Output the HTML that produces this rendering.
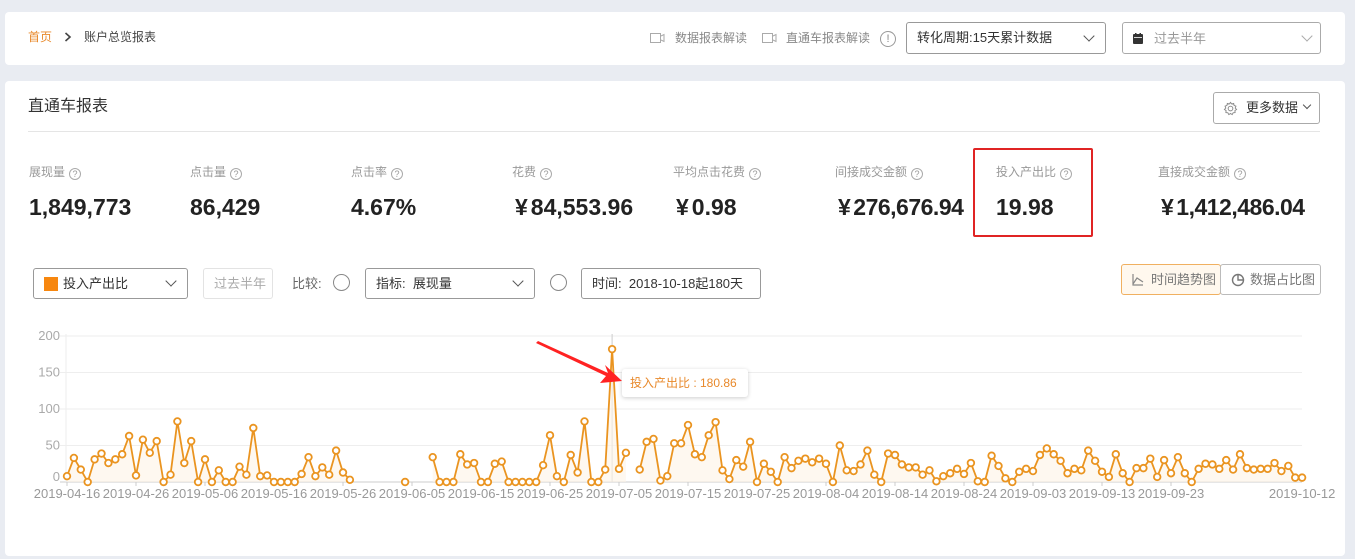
<!DOCTYPE html>
<html><head><meta charset="utf-8">
<style>
*{margin:0;padding:0;box-sizing:border-box}
body{width:1355px;height:559px;background:#e9ecf2;font-family:"Liberation Sans","Noto Sans CJK SC",sans-serif;position:relative;overflow:hidden;color:#333;line-height:1.2}
.a{position:absolute;white-space:nowrap}
.card{position:absolute;background:#fff;border-radius:4px}
.box{position:absolute;border:1px solid #bbb;border-radius:3px;background:#fff;font-size:13px;color:#333}
.chev{position:absolute;width:8px;height:8px;border-right:1.3px solid #555;border-bottom:1.3px solid #555;transform:rotate(45deg)}
.lbl{font-size:12px;color:#999}
.q{display:inline-block;width:12px;height:12px;border:1px solid #aaa;border-radius:50%;font-size:9px;line-height:10px;text-align:center;color:#999;margin-left:4px;vertical-align:-1px}
.val{font-size:23px;font-weight:bold;color:#222;line-height:24px}
.y{margin:0 3px 0 3px}
</style></head><body>
<div class="card" style="left:5px;top:12px;width:1340px;height:53px"></div>
<div class="a" style="left:28px;top:30px;font-size:12px;color:#e8892b">首页</div>
<svg class="a" style="left:64px;top:32px" width="8" height="10"><path d="M1.5 1 L6 5 L1.5 9" fill="none" stroke="#444" stroke-width="1.6"/></svg>
<div class="a" style="left:84px;top:30px;font-size:12px;color:#444">账户总览报表</div>
<svg class="a" style="left:650px;top:33px" width="16" height="11"><rect x="0.5" y="0.5" width="10" height="9" fill="none" stroke="#aaa"/><path d="M11 3 L14 1.5 V8.5 L11 7" fill="none" stroke="#aaa"/></svg>
<div class="a" style="left:675px;top:31px;font-size:12px;color:#888">数据报表解读</div>
<svg class="a" style="left:762px;top:33px" width="16" height="11"><rect x="0.5" y="0.5" width="10" height="9" fill="none" stroke="#aaa"/><path d="M11 3 L14 1.5 V8.5 L11 7" fill="none" stroke="#aaa"/></svg>
<div class="a" style="left:786px;top:31px;font-size:12px;color:#888">直通车报表解读</div>
<div class="a" style="left:880px;top:31px;width:16px;height:16px;border:1px solid #999;border-radius:50%;font-size:11px;line-height:14px;text-align:center;color:#888">!</div>
<div class="box" style="left:906px;top:22px;width:200px;height:32px;border-color:#999"><span class="a" style="left:10px;top:7px">转化周期:15天累计数据</span><span class="chev" style="left:178px;top:9px"></span></div>
<div class="box" style="left:1122px;top:22px;width:199px;height:32px;border-color:#aaa"><svg class="a" style="left:10px;top:10px" width="10" height="11"><rect x="0" y="1" width="10" height="10" rx="1" fill="#333"/><rect x="2" y="0" width="1.5" height="3" fill="#333"/><rect x="6.5" y="0" width="1.5" height="3" fill="#333"/><rect x="1" y="4" width="8" height="0.8" fill="#fff"/></svg><span class="a" style="left:31px;top:8px;color:#999">过去半年</span><span class="chev" style="left:180px;top:9px;border-color:#aaa"></span></div>

<div class="card" style="left:5px;top:81px;width:1340px;height:475px"></div>
<div class="a" style="left:28px;top:97px;font-size:16px;color:#333">直通车报表</div>
<div class="a" style="left:28px;top:131px;width:1292px;height:1px;background:#e5e5e5"></div>
<div class="box" style="left:1213px;top:92px;width:107px;height:32px;border-color:#aaa"><svg class="a" style="left:9px;top:8px" width="15" height="15" viewBox="0 0 16 16"><circle cx="8" cy="8" r="2.5" fill="none" stroke="#888"/><path d="M8 1.5 L9.3 3.2 L11.4 2.6 L11.8 4.7 L13.8 5.5 L13 7.5 L14.5 9 L12.7 10.2 L12.9 12.4 L10.8 12.6 L9.8 14.5 L8 13.3 L6.2 14.5 L5.2 12.6 L3.1 12.4 L3.3 10.2 L1.5 9 L3 7.5 L2.2 5.5 L4.2 4.7 L4.6 2.6 L6.7 3.2 Z" fill="none" stroke="#888"/></svg><span class="a" style="left:32px;top:7px">更多数据</span><span class="chev" style="left:90px;top:9px;width:6px;height:6px"></span></div>

<div class="a lbl" style="left:29px;top:165px">展现量<span class="q">?</span></div>
<div class="a val" style="left:29px;top:195px">1,849,773</div>
<div class="a lbl" style="left:190px;top:165px">点击量<span class="q">?</span></div>
<div class="a val" style="left:190px;top:195px">86,429</div>
<div class="a lbl" style="left:351px;top:165px">点击率<span class="q">?</span></div>
<div class="a val" style="left:351px;top:195px">4.67%</div>
<div class="a lbl" style="left:512px;top:165px">花费<span class="q">?</span></div>
<div class="a val" style="left:512px;top:195px"><span class="y">¥</span>84,553.96</div>
<div class="a lbl" style="left:673px;top:165px">平均点击花费<span class="q">?</span></div>
<div class="a val" style="left:673px;top:195px"><span class="y">¥</span>0.98</div>
<div class="a lbl" style="left:835px;top:165px">间接成交金额<span class="q">?</span></div>
<div class="a val" style="left:835px;top:195px;letter-spacing:-0.5px"><span class="y">¥</span>276,676.94</div>
<div class="a lbl" style="left:996px;top:165px">投入产出比<span class="q">?</span></div>
<div class="a val" style="left:996px;top:195px">19.98</div>
<div class="a lbl" style="left:1158px;top:165px">直接成交金额<span class="q">?</span></div>
<div class="a val" style="left:1158px;top:195px;letter-spacing:-0.5px"><span class="y">¥</span>1,412,486.04</div>
<div class="a" style="left:973px;top:148px;width:120px;height:89px;border:2px solid #e02424;border-radius:2px"></div>

<div class="box" style="left:33px;top:268px;width:155px;height:31px;border-color:#999"><span class="a" style="left:10px;top:8px;width:14px;height:14px;background:#f7870f"></span><span class="a" style="left:29px;top:7px">投入产出比</span><span class="chev" style="left:133px;top:8px"></span></div>
<div class="box" style="left:203px;top:268px;width:70px;height:31px;border-color:#e3e3e3;color:#aaa"><span class="a" style="left:10px;top:7px">过去半年</span></div>
<div class="a" style="left:292px;top:276px;font-size:13px;color:#666">比较:</div>
<div class="a" style="left:333px;top:274px;width:17px;height:17px;border:1px solid #888;border-radius:50%"></div>
<div class="box" style="left:365px;top:268px;width:170px;height:31px;border-color:#999"><span class="a" style="left:10px;top:7px">指标:&nbsp;&nbsp;展现量</span><span class="chev" style="left:148px;top:8px"></span></div>
<div class="a" style="left:550px;top:274px;width:17px;height:17px;border:1px solid #888;border-radius:50%"></div>
<div class="box" style="left:581px;top:268px;width:180px;height:31px;border-color:#999"><span class="a" style="left:10px;top:7px">时间:&nbsp;&nbsp;2018-10-18起180天</span></div>
<div class="box" style="left:1121px;top:264px;width:100px;height:31px;border-color:#f0b060;background:#fff8ee;color:#777"><svg class="a" style="left:10px;top:9px" width="12" height="12"><path d="M1 0 V11 H11 M1 10 L5 4 L11 8" fill="none" stroke="#888" stroke-width="1.2"/></svg><span class="a" style="left:29px;top:7px">时间趋势图</span></div>
<div class="box" style="left:1220px;top:264px;width:101px;height:31px;border-color:#bbb;color:#777"><svg class="a" style="left:10px;top:8px" width="14" height="14"><circle cx="7" cy="7" r="5.5" fill="none" stroke="#777" stroke-width="1.4"/><path d="M7 1.5 V7 H12.5" fill="none" stroke="#777" stroke-width="1.4"/></svg><span class="a" style="left:29px;top:7px">数据占比图</span></div>

<svg id="ch" class="a" style="left:0;top:320px" width="1355" height="200"></svg>
<div class="a" style="left:622px;top:369px;width:126px;height:28px;background:#fff;box-shadow:0 1px 4px rgba(0,0,0,.2);border-radius:3px;font-size:12px;color:#e8892b;padding:7px 0 0 8px">投入产出比 : 180.86</div>
<svg class="a" style="left:530px;top:335px" width="100" height="55"><polygon points="8,6 78,38 75,30 92,46 70,48 76,41 6,8" fill="#f22"/></svg>

<script>
var d=[8,33,17,0,31,39,26,31,38,63,9,58,40,56,0,10,83,26,56,0,31,0,16,0,0,21,10,74,8,9,0,0,0,0,11,34,8,20,10,43,13,3,null,null,null,null,null,null,null,0,null,null,null,34,0,0,0,38,24,26,0,0,25,28,0,0,0,0,0,23,64,8,0,37,13,83,0,0,17,182,18,40,null,17,55,59,2,8,53,53,78,38,34,64,82,16,4,30,21,55,0,25,14,0,34,19,29,32,27,32,25,0,50,16,15,24,43,10,0,39,37,24,20,20,10,16,1,8,12,18,11,26,1,0,36,22,5,0,14,18,15,37,46,38,29,12,18,16,43,29,14,7,38,12,0,19,19,32,7,30,12,34,12,0,18,25,24,18,30,17,38,19,17,18,18,26,15,22,6,6];
var X=function(i){return 67+i*6.9},Y=function(v){return 162-v*0.73};
var s='';
[200,150,100,50].forEach(function(v){var y=Y(v);s+='<line x1="60" x2="1302" y1="'+y+'" y2="'+y+'" stroke="#eee"/><text x="60" y="'+(y+4)+'" font-size="13" fill="#aaa" text-anchor="end" font-family="Liberation Sans">'+v+'</text>';});
s+='<text x="60" y="'+(Y(0)-1)+'" font-size="13" fill="#aaa" text-anchor="end" font-family="Liberation Sans">0</text>';
s+='<line x1="60" x2="1302" y1="162" y2="162" stroke="#ccc"/><line x1="66" x2="66" y1="14" y2="162" stroke="#eee"/>';
s+='<line x1="'+X(79)+'" x2="'+X(79)+'" y1="14" y2="162" stroke="#ccc"/>';
var labs=['2019-04-16','2019-04-26','2019-05-06','2019-05-16','2019-05-26','2019-06-05','2019-06-15','2019-06-25','2019-07-05','2019-07-15','2019-07-25','2019-08-04','2019-08-14','2019-08-24','2019-09-03','2019-09-13','2019-09-23'];
labs.forEach(function(l,k){var x=X(k*10);s+='<line x1="'+x+'" x2="'+x+'" y1="162" y2="166" stroke="#ccc"/><text x="'+x+'" y="178" font-size="13" fill="#999" text-anchor="middle" font-family="Liberation Sans">'+l+'</text>';});
s+='<text x="'+X(179)+'" y="178" font-size="13" fill="#999" text-anchor="middle" font-family="Liberation Sans">2019-10-12</text>';
var segs=[],cur=[];
d.forEach(function(v,i){if(v===null){if(cur.length)segs.push(cur);cur=[];}else cur.push([X(i),Y(v)]);});
if(cur.length)segs.push(cur);
segs.forEach(function(g){var p=g.map(function(q){return q[0].toFixed(1)+','+q[1].toFixed(1)}).join(' ');
if(g.length>1)s+='<polygon points="'+g[0][0]+',162 '+p+' '+g[g.length-1][0]+',162" fill="#fdf3e6" opacity=".6"/>';
s+='<polyline points="'+p+'" fill="none" stroke="#ea9420" stroke-width="1.8"/>';});
d.forEach(function(v,i){if(v!==null)s+='<circle cx="'+X(i)+'" cy="'+Y(v)+'" r="3.3" fill="#fff" stroke="#ea9420" stroke-width="1.8"/>';});
document.getElementById('ch').innerHTML=s;
</script>
</body></html>
